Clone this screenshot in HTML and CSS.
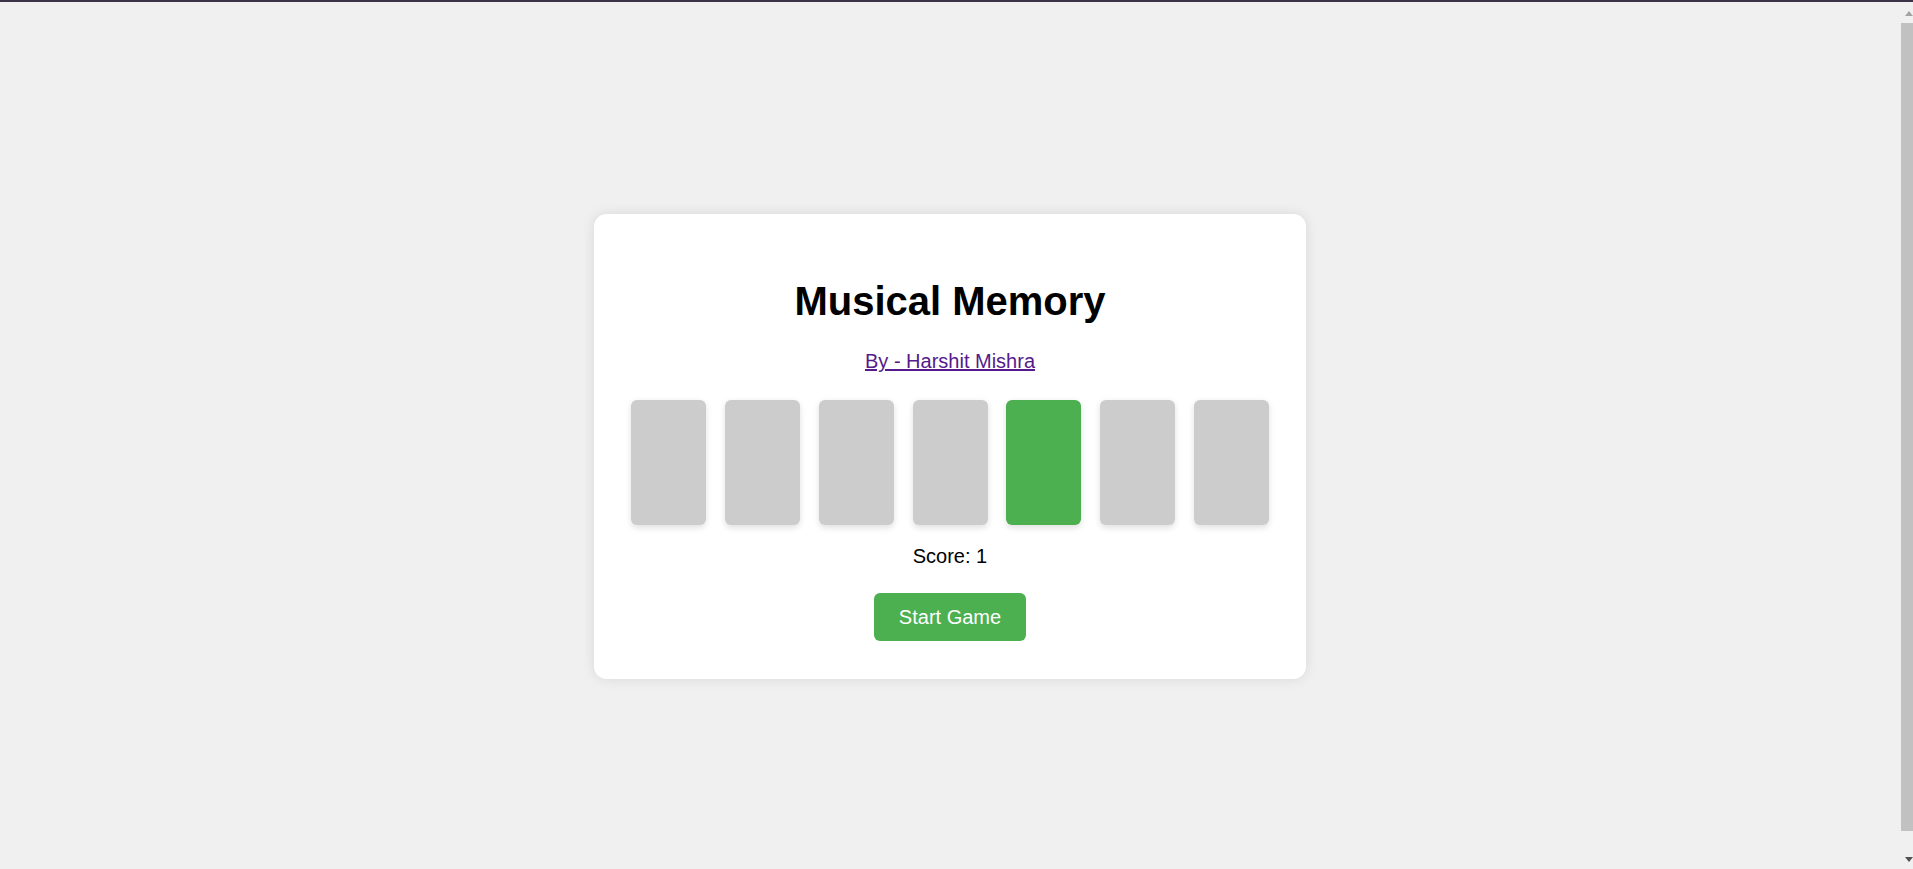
FILE: index.html
```html
<!DOCTYPE html>
<html lang="en">
<head>
<meta charset="utf-8">
<title>Musical Memory</title>
<link rel="stylesheet" href="styles.css">
</head>
<body>
  <main class="game">
    <h1 class="title">Musical Memory</h1>
    <div class="byline"><a class="author" href="#">By - Harshit Mishra</a></div>
    <div class="tiles">
      <div class="tile"></div>
      <div class="tile"></div>
      <div class="tile"></div>
      <div class="tile"></div>
      <div class="tile tile-active"></div>
      <div class="tile"></div>
      <div class="tile"></div>
    </div>
    <div class="score">Score: 1</div>
    <button class="start" type="button">Start Game</button>
  </main>
  <aside class="scrollbar" aria-hidden="true">
    <span class="arrow arrow-up"></span>
    <span class="thumb"></span>
    <span class="arrow arrow-down"></span>
  </aside>
</body>
</html>
```
FILE: styles.css
```css
html {
  background: #f0f0f0;
  border-top: 2px solid #3b3347;
}
body {
  margin: 10px 23px 10px 10px;
  height: 100vh;
  display: flex;
  align-items: center;
  justify-content: center;
  font-family: "Liberation Sans", Arial, sans-serif;
  font-size: 20px;
  color: #000;
}
.game {
  background: #fff;
  padding: 37.5px;
  border-radius: 12.5px;
  box-shadow: 0 0 12.5px rgba(0, 0, 0, 0.1);
  text-align: center;
}
.title {
  font-size: 40px;
  font-weight: bold;
  margin: 26.8px 0;
}
.byline {
  line-height: 23px;
}
.author {
  color: #551a8b;
}
.tiles {
  display: flex;
  gap: 18.75px;
  margin-top: 27.2px;
}
.tile {
  width: 75px;
  height: 125px;
  background: #cccccc;
  border-radius: 6px;
  box-shadow: 0 2.5px 6px rgba(0, 0, 0, 0.12);
}
.tile-active {
  background: #4caf50;
}
.score {
  margin-top: 19.5px;
  line-height: 23px;
}
.start {
  margin-top: 25.3px;
  font-family: "Liberation Sans", Arial, sans-serif;
  font-size: 20px;
  line-height: 23px;
  padding: 12.5px 25px;
  color: #fff;
  background: #4caf50;
  border: none;
  border-radius: 6px;
}
.scrollbar {
  position: fixed;
  top: 2px;
  right: 0;
  bottom: 0;
  width: 13px;
  background: #f0f0f0;
  display: flex;
  flex-direction: column;
  align-items: flex-end;
}
.arrow {
  width: 0;
  height: 0;
  border-left: 4px solid transparent;
  border-right: 4px solid transparent;
}
.arrow-up {
  margin-top: 9px;
  border-bottom: 5px solid #a3a3a3;
}
.thumb {
  margin-top: 7px;
  width: 12px;
  height: 808px;
  background: #c1c1c1;
}
.arrow-down {
  margin-top: 26px;
  border-top: 5px solid #505050;
}
```
